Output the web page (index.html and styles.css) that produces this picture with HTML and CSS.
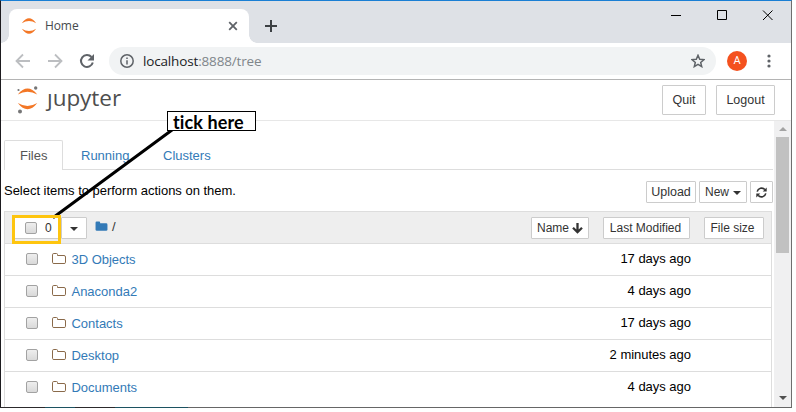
FILE: index.html
```html
<!DOCTYPE html>
<html lang="en">
<head>
<meta charset="utf-8">
<title>Home</title>
<link rel="stylesheet" href="styles.css">
</head>
<body>
<svg class="defs" width="0" height="0">
  <symbol id="folder" viewBox="0 0 14 12"><path d="M.5 1.8Q.5.5 1.8.5H4.500Q5.500.5 5.500 1.500V2.500H12Q13.500 2.500 13.500 4V9.500Q13.500 10.500 12 10.500H2Q.5 10.500.5 9.500Z"/></symbol>
</svg>
<div class="window">
  <div class="tabstrip">
    <div class="tab">
      <svg class="favicon" width="16" height="16" viewBox="0 0 16 16"><path d="M.8 5.300Q8-4.600 15.200 5.300Q8 .8.8 5.300ZM.8 10.700Q8 20.600 15.200 10.700Q8 15.200.8 10.700Z"/></svg>
      <span class="tab-title">Home</span>
      <svg class="tab-close" width="10" height="10" viewBox="0 0 10 10"><path d="M1.200 1.200 8.800 8.800M8.800 1.200 1.200 8.800"/></svg>
    </div>
    <svg class="newtab" width="12" height="12" viewBox="0 0 12 12"><path d="M6 0V12M0 6H12"/></svg>
    <svg class="controls" width="88" height="12" viewBox="0 0 88 12"><path d="M1 5.500H11M47.500.5H56.500V9.500H47.500Z"/><path d="M93 .5 102.500 10M102.500.5 93 10"/></svg>
  </div>
  <div class="toolbar">
    <svg class="nav" width="80" height="16" viewBox="0 0 80 16"><g class="dim"><path d="M15 8H2M8 1.500 1.500 8 8 14.500M33 8H46M40 1.500 46.500 8 40 14.500"/></g><path class="reload" d="M76.500 4A6 6 0 1 0 77.800 9.500"/><path class="reload-tip" d="M79 1V7.500H72.500Z"/></svg>
    <div class="address">
      <svg width="14" height="14" viewBox="0 0 14 14"><circle cx="7" cy="7" r="6.200"/><path d="M7 6.200V10.500M7 3.500V5"/></svg>
      <span class="url">localhost<span class="path">:8888/tree</span></span>
      <svg class="star" width="14" height="14" viewBox="0 0 14 14"><path d="M7 1.300 8.700 5.200 13 5.600 9.700 8.400 10.700 12.600 7 10.400 3.300 12.600 4.300 8.400 1 5.600 5.300 5.200Z"/></svg>
    </div>
    <div class="avatar">A</div>
    <svg class="more" width="4" height="14" viewBox="0 0 4 14"><circle cx="2" cy="2" r="1.600"/><circle cx="2" cy="7" r="1.600"/><circle cx="2" cy="12" r="1.600"/></svg>
  </div>
  <header class="header">
    <svg class="logo" width="24" height="30" viewBox="0 0 24 30"><g class="arcs"><path d="M.8 10.500Q10.500-1.300 20.300 10.500Q10.500 4.800.8 10.500ZM.8 19Q10.500 31.500 20.300 19Q10.500 24.800.8 19Z"/></g><circle cx="18.700" cy="4" r="1.700"/><circle cx="1.500" cy="6" r="1.100"/><circle cx="3" cy="27.500" r="2"/></svg>
    <span class="brand"><span class="dotless">j</span>upyter</span>
    <button class="big quit">Quit</button>
    <button class="big logout">Logout</button>
  </header>
  <div class="body">
    <main class="page">
      <nav class="tabs"><a class="files">Files</a><a class="running">Running</a><a class="clusters">Clusters</a></nav>
      <div class="actions">
        <span class="hint">Select items to perform actions on them.</span>
        <button class="btn upload">Upload</button>
        <button class="btn new">New<i class="caret"></i></button>
        <button class="btn refresh"><svg width="11" height="11" viewBox="0 0 11 11"><path class="ring" d="M1.200 4.600A4.400 4.400 0 0 1 8.800 2.600M9.800 6.400A4.400 4.400 0 0 1 2.200 8.400"/><path class="tips" d="M10.700.5V4.500H6.700ZM.3 10.500V6.500H4.300Z"/></svg></button>
      </div>
      <div class="list">
        <div class="list-head">
          <button class="btn select"><i class="check"></i>0</button>
          <button class="btn drop"><i class="caret"></i></button>
          <svg class="root" width="13" height="11" viewBox="0 0 14 12"><use href="#folder"/></svg>
          <span class="slash">/</span>
          <button class="btn name">Name<svg width="11" height="11" viewBox="0 0 11 11"><path d="M5.500 0V9M1 4.800 5.500 9.200 10 4.800"/></svg></button>
          <button class="btn modified">Last Modified</button>
          <button class="btn size">File size</button>
        </div>
        <div class="row"><i class="check"></i><svg class="folder" width="14" height="12"><use href="#folder"/></svg><a>3D Objects</a><time>17 days ago</time></div>
        <div class="row"><i class="check"></i><svg class="folder" width="14" height="12"><use href="#folder"/></svg><a>Anaconda2</a><time>4 days ago</time></div>
        <div class="row"><i class="check"></i><svg class="folder" width="14" height="12"><use href="#folder"/></svg><a>Contacts</a><time>17 days ago</time></div>
        <div class="row"><i class="check"></i><svg class="folder" width="14" height="12"><use href="#folder"/></svg><a>Desktop</a><time>2 minutes ago</time></div>
        <div class="row"><i class="check"></i><svg class="folder" width="14" height="12"><use href="#folder"/></svg><a>Documents</a><time>4 days ago</time></div>
      </div>
    </main>
    <div class="scrollbar"><i class="up"></i><div class="thumb"></div><i class="down"></i></div>
  </div>
  <svg class="pointer" width="130" height="100" viewBox="0 0 130 100"><path d="M123 4 5 91"/></svg>
  <div class="highlight"></div>
  <div class="callout">tick here</div>
</div>
</body>
</html>
```
FILE: styles.css
```css
* { box-sizing: border-box; }
body { margin: 0; background: #fff; overflow: hidden; font: 13px/20px "Liberation Sans", sans-serif; color: #000; }
svg { display: block; flex: none; }
.defs { position: absolute; }
.window { position: relative; width: 792px; height: 408px; border: solid; border-width: 1px; border-color: #1a7fd4 #6e6e6e #666 #1d1b1f; }
.window::after { content: ""; position: absolute; left: -1px; bottom: -1px; width: 188px; height: 1px; background: linear-gradient(90deg, #2c2a2c 0 45px, #1c5261 45px 75px, #2c2a2c 75px 115px, #1c5261 115px); }
.tabstrip { height: 42px; background: #dee1e6; display: flex; padding-left: 8px; }
.tab { width: 240px; height: 34px; margin-top: 8px; background: #fff; border-radius: 8px 8px 0 0; display: flex; align-items: center; padding: 0 11px 0 12px; position: relative; }
.tab::before, .tab::after { content: ""; position: absolute; bottom: 0; width: 8px; height: 8px; }
.tab::before { left: -8px; background: radial-gradient(circle at 0 0, #dee1e6 7.5px, #fff 8px); }
.tab::after { right: -8px; background: radial-gradient(circle at 100% 0, #dee1e6 7.5px, #fff 8px); }
.favicon { fill: #f37726; }
.tab-title { font: 12px/16px "Open Sans", sans-serif; color: #45494d; margin-left: 8px; flex: 1; letter-spacing: -.1px; }
.tab-close { fill: none; stroke: #5f6368; stroke-width: 1.8; }
.newtab { margin: 19px 0 0 16px; stroke: #3c4043; stroke-width: 2; }
.controls { margin: 9px 33px 0 auto; overflow: visible; fill: none; stroke: #000; }
.toolbar { height: 37px; border-bottom: 1px solid #b4b4b4; display: flex; align-items: center; padding: 0 20px 0 14px; background: #fff; }
.nav { margin-right: 14px; fill: none; stroke: #5f6368; stroke-width: 2; }
.nav .dim { stroke: #bcbec1; stroke-width: 1.8; }
.nav .reload-tip { fill: #5f6368; stroke: none; }
.address { width: 607px; height: 28px; border-radius: 14px; background: #f1f3f4; display: flex; align-items: center; padding: 0 11px; }
.address svg { fill: none; stroke: #5f6368; stroke-width: 1.5; }
.url { font: 13.5px/20px "Open Sans", sans-serif; color: #202124; margin-left: 9px; flex: 1; letter-spacing: -.16px; }
.path { color: #80868b; }
.avatar { width: 20px; height: 20px; border-radius: 50%; background: #f4511e; color: #fff; font: 11px/20px Roboto, sans-serif; text-align: center; margin-left: 11px; }
.more { margin-left: auto; fill: #5f6368; }
.header { height: 41px; border-bottom: 1px solid #e7e7e7; display: flex; padding-right: 16px; }
.logo { margin: 4px 0 0 16px; fill: #767677; }
.logo .arcs { fill: #f37726; }
.brand { font: 22.5px/30px "Open Sans", sans-serif; color: #4e4e4e; margin: 3px 0 0 6px; flex: 1; height: 36px; letter-spacing: -.05px; }
.dotless { display: inline-block; clip-path: inset(11px -4px -4px -6px); }
button { font: 12px "Liberation Sans", sans-serif; color: #333; background: #fff; border: 1px solid #ccc; border-radius: 1px; padding: 0; white-space: nowrap; flex: none; }
.big { height: 30px; margin-top: 5px; font-size: 12.5px; }
.quit { width: 44px; }
.logout { width: 59px; margin-left: 10px; }
.body { height: 286px; display: flex; justify-content: space-between; }
.page { width: 772px; padding: 19px 0 0 3px; overflow: hidden; }
.tabs { width: 769px; height: 30px; border-bottom: 1px solid #ddd; display: flex; line-height: 32px; }
.tabs a { color: #337ab7; }
.tabs .files { width: 59px; height: 30px; border: 1px solid #ddd; border-bottom: 0; border-radius: 2px 2px 0 0; background: #fff; color: #555; padding-left: 15px; line-height: 30px; }
.tabs .running { margin-left: 18px; width: 82px; }
.actions { height: 41px; width: 769px; display: flex; padding-top: 11px; }
.hint { flex: 1; letter-spacing: -.02px; }
.btn { height: 22px; display: flex; align-items: center; justify-content: center; }
.caret { border: solid transparent; border-width: 4px 4px 0; border-top-color: #333; }
.upload { width: 50px; font-size: 12.5px; }
.new { width: 48px; margin: 0 3px; }
.new .caret { margin: 2px 0 0 4px; }
.refresh { width: 23px; }
.ring { fill: none; stroke: #333; stroke-width: 1.6; }
.tips { fill: #333; }
.list { width: 768px; border: 1px solid #ddd; border-bottom: 0; height: 197px; }
.list-head { height: 31px; background: #eee; display: flex; padding: 5px 7px 0 9px; }
.select { width: 47px; justify-content: flex-start; padding-left: 10px; }
.select .check { margin: -1px 8px 0 0; }
.drop { width: 26px; }
.drop .caret { margin-top: 2px; }
.root { margin: 4px 0 0 8px; fill: #337ab7; }
.slash { flex: 1; margin-left: 4px; line-height: 19px; color: #333; }
.name { width: 58px; }
.name svg { margin-left: 3px; fill: none; stroke: #333; stroke-width: 2.3; }
.modified { width: 87px; margin: 0 14px; padding-right: 2px; }
.size { width: 60px; padding-right: 3px; }
.row { height: 32px; border-top: 1px solid #ddd; display: flex; align-items: center; padding: 0 80px 0 21px; letter-spacing: -.02px; }
.check { width: 12px; height: 12px; border: 1px solid #a2a2a2; border-radius: 2px; background: linear-gradient(#eee, #d9d9d9); flex: none; }
.row .check { margin-top: -1px; }
.folder { margin: -1px 0 0 14px; fill: #fff; stroke: #8a6a4a; }
.row a { color: #337ab7; margin-left: 5.5px; flex: 1; }
.row time { margin-top: -1px; }
.scrollbar { width: 17px; background: #f0f0f1; padding: 6px 2px 7px; display: flex; flex-direction: column; align-items: center; }
.thumb { width: 13px; height: 116px; background: #c1c1c1; margin-top: 6px; }
.up, .down { border: solid transparent; }
.up { border-width: 0 4px 4px; border-bottom-color: #a3a3a3; }
.down { border-width: 4px 4px 0; border-top-color: #505050; margin-top: auto; }
.pointer { position: absolute; left: 48px; top: 125px; stroke: #000; stroke-width: 3; stroke-linecap: round; }
.highlight { position: absolute; left: 11px; top: 214px; width: 49px; height: 29px; border: 3px solid #fec50f; }
.callout { position: absolute; left: 166px; top: 110px; width: 89px; height: 20px; border: 1px solid #000; background: #fff; font: bold 18px/20px Lato, sans-serif; font-variant-ligatures: none; padding-left: 5px; white-space: nowrap; letter-spacing: .1px; }
```
